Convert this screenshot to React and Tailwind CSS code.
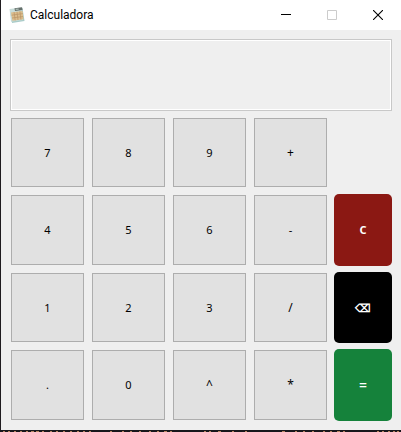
import { useState } from "react";

const ROWS = [
  ["7", "8", "9", "+"],
  ["4", "5", "6", "-"],
  ["1", "2", "3", "/"],
  [".", "0", "^", "*"],
];

// Right column actions, one per row; the first row has none.
const ACTIONS = [
  null,
  { label: "C", name: "Limpiar", style: "bg-[#8b1813] text-[11px] font-bold" },
  { label: "⌫", name: "Borrar", style: "bg-black text-[11px] font-bold" },
  { label: "=", name: "Igual", style: "bg-[#15823b] text-[14px] font-medium" },
];

// Start and length of the light marks along the window's bottom edge.
const MARKS = [
  [3, 2], [8, 2], [14, 2], [20, 2], [26, 2], [31, 3], [36, 3], [42, 2],
  [50, 2], [56, 2], [63, 2], [70, 2], [77, 2], [83, 2], [89, 2], [110, 2],
  [122, 2], [130, 2], [139, 2], [149, 2], [157, 2], [164, 3], [170, 2],
  [204, 2], [209, 2], [218, 3], [232, 2], [245, 2], [282, 3], [295, 2],
  [303, 2], [312, 2], [323, 2], [330, 2], [337, 3], [343, 2], [377, 2],
  [382, 2], [388, 2], [393, 2], [397, 2],
];

function AppIcon() {
  return (
    <svg className="size-4" viewBox="0 0 16 16" aria-hidden="true">
      <path d="M1 3 13.5 1 15.5 14 3 16Z" fill="#a9cbc8" />
      <path d="M0.5 2 12.5 0.5 14 13 2 14.8Z" fill="#c8dcd8" />
      <path d="M5.5 1.2 13 0.3 13.6 3 6 4Z" fill="#656f6b" />
      <path d="M6.5 1.8 9.5 1.5 9.8 2.8 6.8 3.1Z" fill="#aebeb8" />
      <path d="M2 5.6 13.5 4 14.5 12.2 3.4 13.8Z" fill="#dbbd8c" />
      <path
        d="M2.5 8.2 13.8 6.6M3 11 14 9.5M5.1 5.2 6.2 13.4M8 4.8 9 13M10.9 4.4 11.9 12.6"
        stroke="#b99465"
        strokeWidth="0.7"
        fill="none"
      />
    </svg>
  );
}

function WindowButton({ label, disabled, children }) {
  return (
    <button
      type="button"
      aria-label={label}
      disabled={disabled}
      className="flex h-full w-[46px] items-center justify-center"
    >
      <svg className="size-2.5" viewBox="0 0 10 10" fill="none">
        {children}
      </svg>
    </button>
  );
}

export default function App() {
  const [value, setValue] = useState("");

  function act(label) {
    if (label === "C") setValue("");
    if (label === "⌫") setValue(value.slice(0, -1));
  }

  return (
    <div className="bg-[#efefef] font-['Noto_Sans',sans-serif] text-black">
      <div className="border-l border-[#201c20]">
        <header className="flex h-[30px] items-center bg-white pl-2">
          <AppIcon />
          <h1 className="ml-[5px] flex-1 font-['Roboto',sans-serif] text-[12px] leading-4">Calculadora</h1>
          <WindowButton label="Minimizar">
            <path d="M0 4.5H10" stroke="#000" shapeRendering="crispEdges" />
          </WindowButton>
          <WindowButton label="Maximizar" disabled>
            <path d="M0.5 0.5H9.5V9.5H0.5Z" stroke="#ccc" />
          </WindowButton>
          <WindowButton label="Cerrar">
            <path d="M0 0 10 10M10 0 0 10" stroke="#000" strokeWidth="1.1" />
          </WindowButton>
        </header>

        <main className="px-[9px] py-[9px]">
          <input
            type="text"
            aria-label="Pantalla"
            readOnly
            value={value}
            className="block h-[72px] w-full border border-[#c8c8c8] bg-[#efefef] px-3 text-right text-2xl ring-1 ring-inset ring-white outline-none"
          />
          <div className="mt-1.5 grid grid-cols-[repeat(4,minmax(0,1fr))_58px] grid-rows-[71px_72px_71px_72px] gap-1.5">
            {ROWS.map((keys, row) => [
              ...keys.map((key) => (
                <button
                  key={key}
                  type="button"
                  onClick={() => setValue(value + key)}
                  className={`m-px border border-[#adadad] bg-[#e1e1e1] leading-4 ${"+/*^".includes(key) ? "text-[12px]" : "text-[11px]"}`}
                >
                  {key}
                </button>
              )),
              ACTIONS[row] ? (
                <button
                  key={ACTIONS[row].name}
                  type="button"
                  aria-label={ACTIONS[row].name}
                  onClick={() => act(ACTIONS[row].label)}
                  className={`rounded-[5px] leading-4 text-white ${ACTIONS[row].style}`}
                >
                  {ACTIONS[row].label}
                </button>
              ) : (
                <span key="blank" />
              ),
            ])}
          </div>
        </main>
      </div>
      <svg className="block h-0.5 w-full bg-[#17161b]" viewBox="0 0 401 2" preserveAspectRatio="none" aria-hidden="true">
        {MARKS.map(([x, length]) => (
          <rect key={x} x={x} y="1" width={length} height="1" fill="#b5835f" />
        ))}
      </svg>
    </div>
  );
}
